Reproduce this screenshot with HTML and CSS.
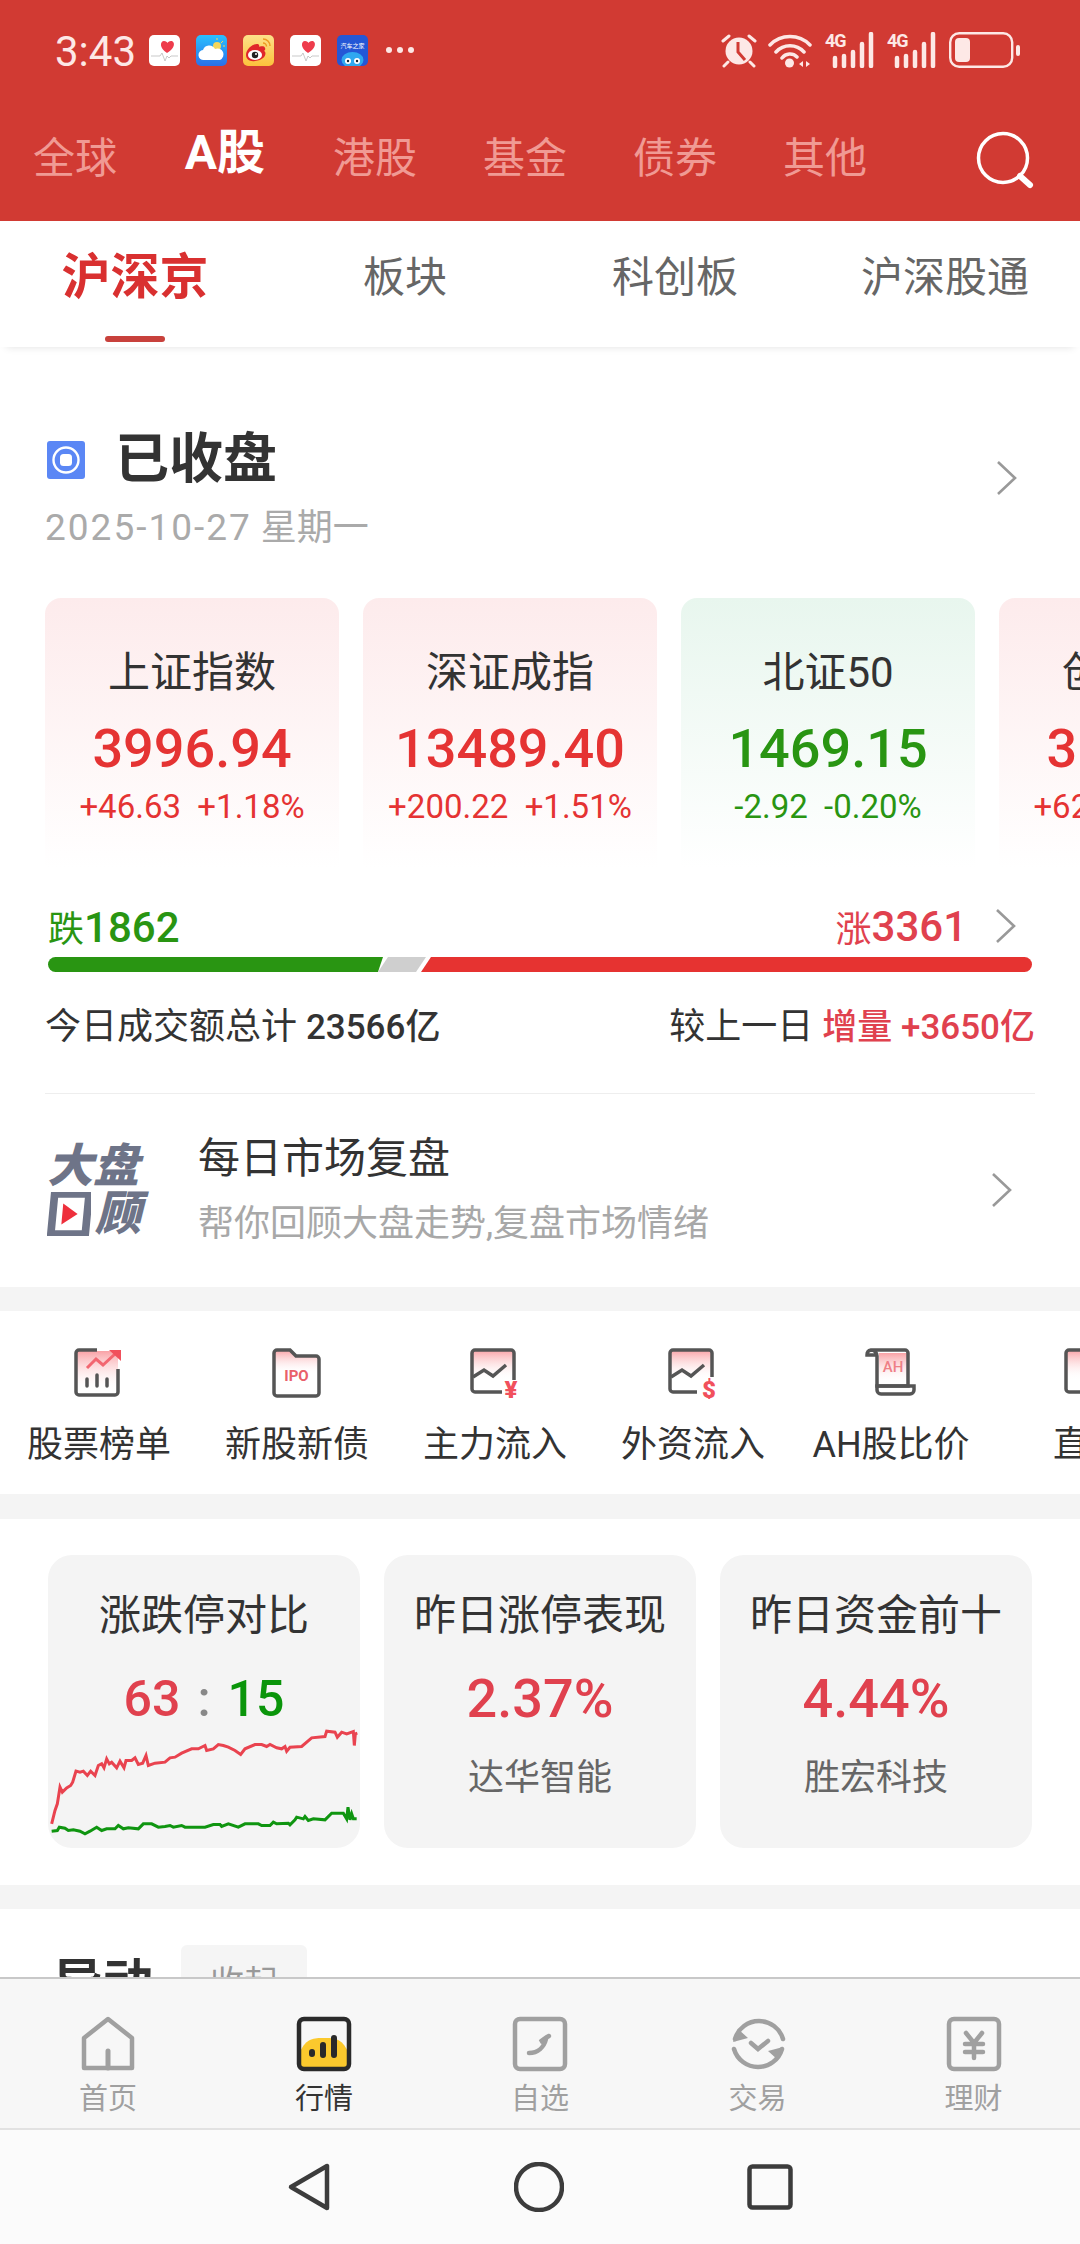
FILE: index.html
```html
<!DOCTYPE html>
<html lang="zh-CN">
<head>
<meta charset="utf-8">
<title>行情</title>
<link rel="stylesheet" href="styles.css">
</head>
<body>
<div class="app">
  <header class="top">
    <div class="status">
      <div class="status-left">
        <span class="time">3:43</span>
        <svg class="app-ic" viewBox="0 0 31 31"><rect width="31" height="31" rx="5" fill="#fff"/><path d="M15 17c-8-5-7-12-3-12 2 0 3 1 3.500 2 .5-1 1.500-2 3.500-2 4 0 5 7-4 12z" transform="translate(3 1)" fill="#ee3c4c"/><path d="M2 21h9l2-3 3 8 2-5 2 2 2-2h7" fill="none" stroke="#bbb" stroke-width=".8"/></svg>
        <svg class="app-ic" viewBox="0 0 31 31"><defs><linearGradient id="sky" x1="0" y1="0" x2="0" y2="1"><stop offset="0" stop-color="#2ac0ff"/><stop offset="1" stop-color="#2a6fe8"/></linearGradient></defs><rect width="31" height="31" rx="5" fill="url(#sky)"/><circle cx="21" cy="11" r="4" fill="#f4d65c"/><path d="M21 3v2M27 6l-2 2M29 11h-2" stroke="#f4d65c" stroke-width="1"/><path d="M8 25a5 5 0 0 1-1-10 6.500 6.500 0 0 1 12-1 5.500 5.500 0 0 1 5 11z" fill="#fff"/></svg>
        <svg class="app-ic" viewBox="0 0 31 31"><defs><linearGradient id="wb" x1="0" y1="0" x2="0" y2="1"><stop offset="0" stop-color="#fde08a"/><stop offset="1" stop-color="#fcc23c"/></linearGradient></defs><rect width="31" height="31" rx="5" fill="url(#wb)"/><path d="M3 20c0-6 7-12 12-11 2 1 1 3 1 3s5-2 6 1c1 2-1 3-1 3 3 1 2 9-9 10C7 27 3 24 3 20z" fill="#e0262a"/><ellipse cx="12" cy="20" rx="7" ry="5" fill="#fff"/><circle cx="12" cy="20" r="3.200" fill="#222"/><circle cx="13" cy="19" r="1" fill="#fff"/><path d="M20 4a7 7 0 0 1 7 7M20 8a3.500 3.500 0 0 1 3.500 3.500" fill="none" stroke="#ee9a22" stroke-width="1.500"/></svg>
        <svg class="app-ic" viewBox="0 0 31 31"><rect width="31" height="31" rx="5" fill="#fff"/><path d="M15 17c-8-5-7-12-3-12 2 0 3 1 3.500 2 .5-1 1.500-2 3.500-2 4 0 5 7-4 12z" transform="translate(3 1)" fill="#ee3c4c"/><path d="M2 21h9l2-3 3 8 2-5 2 2 2-2h7" fill="none" stroke="#bbb" stroke-width=".8"/></svg>
        <svg class="app-ic" viewBox="0 0 31 31"><rect width="31" height="31" rx="5" fill="#2457d6"/><text class="auto-text" x="15.500" y="13" text-anchor="middle">汽车之家</text><ellipse cx="15.500" cy="25" rx="11" ry="8" fill="#2fa8f0"/><circle cx="11" cy="26" r="3" fill="#fff"/><circle cx="20" cy="26" r="3" fill="#fff"/><circle cx="11" cy="26" r="1.200" fill="#123"/><circle cx="20" cy="26" r="1.200" fill="#123"/></svg>
        <span class="more-dots"><i></i><i></i><i></i></span>
      </div>
      <div class="status-right">
        <svg class="st-alarm" viewBox="0 0 36 36"><circle cx="18" cy="19" r="13.500" fill="#fde8e6"/><path d="M17 10v10l7 8" fill="none" stroke="#d13a33" stroke-width="3"/><path d="M2 9l6-5M34 9l-6-5M7 30l-4 4M29 30l4 4" stroke="#fde8e6" stroke-width="3" stroke-linecap="round"/></svg>
        <svg class="st-wifi" viewBox="0 0 44 36"><path d="M2 13a28 28 0 0 1 40 0M8 20a19 19 0 0 1 28 0M14 26a10 10 0 0 1 15-1" fill="none" stroke="#fde8e6" stroke-width="3.500" stroke-linecap="round"/><circle cx="21.500" cy="31" r="4.500" fill="#fde8e6"/><path d="M35 29l-4 3 4 3zM38 29l4 3-4 3z" fill="#fde8e6"/></svg>
        <span class="sig"><span class="sig-label">4G</span><svg viewBox="0 0 50 36"><path d="M10 26v8M19 24v10M28 20v14M37 12v22M46 2v32" fill="none" stroke="#fde8e6" stroke-width="4.500" stroke-linecap="round"/></svg></span>
        <span class="sig"><span class="sig-label">4G</span><svg viewBox="0 0 50 36"><path d="M10 26v8M19 24v10M28 20v14M37 12v22M46 2v32" fill="none" stroke="#fde8e6" stroke-width="4.500" stroke-linecap="round"/></svg></span>
        <svg class="st-batt" viewBox="0 0 72 36"><rect x="1.200" y="1.200" width="62" height="33.600" rx="9" fill="none" stroke="#fde8e6" stroke-width="2.400"/><rect x="6" y="6" width="15" height="24" rx="4" fill="#fde8e6"/><rect x="67" y="13" width="4" height="11" rx="2" fill="#fde8e6"/></svg>
      </div>
    </div>
    <nav class="market-tabs">
      <span class="m-tab">全球</span>
      <span class="m-tab m-tab-on">A股</span>
      <span class="m-tab">港股</span>
      <span class="m-tab">基金</span>
      <span class="m-tab">债券</span>
      <span class="m-tab">其他</span>
      <svg class="search" viewBox="0 0 58 58"><circle cx="27" cy="27" r="24.500" fill="none" stroke="#fff" stroke-width="3.500"/><path d="M44 45l10 9" stroke="#fff" stroke-width="6" stroke-linecap="round"/></svg>
    </nav>
  </header>

  <nav class="sub-tabs">
    <span class="s-tab s-tab-on">沪深京</span>
    <span class="s-tab">板块</span>
    <span class="s-tab">科创板</span>
    <span class="s-tab">沪深股通</span>
  </nav>

  <main class="content">
    <section class="overview">
      <div class="head-row">
        <div class="head-text">
          <div class="head-title">
            <svg class="closed-ic" viewBox="0 0 38 38"><rect width="38" height="38" rx="3" fill="#5b87f5"/><circle cx="19" cy="19" r="12.500" fill="none" stroke="#fff" stroke-width="2.400"/><rect x="13" y="13" width="12" height="12" rx="3.500" fill="#fff"/></svg>
            <h1>已收盘</h1>
          </div>
          <p class="date"><span class="date-num">2025-10-27</span> 星期一</p>
        </div>
        <svg class="chev chev-head" viewBox="0 0 22 36"><path d="M2 2l17 16L2 34" fill="none" stroke="#999" stroke-width="2.600"/></svg>
      </div>

      <div class="index-row">
        <div class="idx idx-up"><div class="idx-name">上证指数</div><div class="idx-val">3996.94</div><div class="idx-chg">+46.63&nbsp;&nbsp;+1.18%</div></div>
        <div class="idx idx-up"><div class="idx-name">深证成指</div><div class="idx-val">13489.40</div><div class="idx-chg">+200.22&nbsp;&nbsp;+1.51%</div></div>
        <div class="idx idx-down"><div class="idx-name">北证50</div><div class="idx-val">1469.15</div><div class="idx-chg">-2.92&nbsp;&nbsp;-0.20%</div></div>
        <div class="idx idx-up"><div class="idx-name">创业板指</div><div class="idx-val">3142.18</div><div class="idx-chg">+62.62&nbsp;&nbsp;+2.00%</div></div>
      </div>

      <div class="breadth-head">
        <span class="fall">跌<b>1862</b></span>
        <span class="rise">涨<b>3361</b><svg class="chev chev-rise" viewBox="0 0 22 36"><path d="M2 2l17 16L2 34" fill="none" stroke="#999" stroke-width="2.600"/></svg></span>
      </div>
      <div class="bar">
        <i class="bar-g"></i><i class="bar-n"></i><i class="bar-r"></i>
      </div>
      <div class="volume">
        <span>今日成交额总计 <b>23566亿</b></span>
        <span>较上一日 <b class="red">增量 +3650亿</b></span>
      </div>

      <div class="review">
        <div class="logo">
          <span class="logo-t">大盘</span>
          <span class="logo-b"><svg viewBox="0 0 46 46"><path d="M8 2h36l-4 42H4z" fill="#fff" stroke="#6e7488" stroke-width="8"/><path d="M17 12l15 11-17 11z" fill="#ee2f3c"/></svg><span>顾</span></span>
        </div>
        <div class="review-text">
          <div class="review-title">每日市场复盘</div>
          <div class="review-sub">帮你回顾大盘走势,复盘市场情绪</div>
        </div>
        <svg class="chev chev-review" viewBox="0 0 22 36"><path d="M2 2l17 16L2 34" fill="none" stroke="#999" stroke-width="2.600"/></svg>
      </div>
    </section>

    <section class="quick">
      <div class="q-item">
        <svg class="q-ic" viewBox="0 0 52 52"><defs><linearGradient id="pk" x1="0" y1="0" x2="0" y2="1"><stop offset="0" stop-color="#f9a2a6"/><stop offset="1" stop-color="#fff" stop-opacity="0"/></linearGradient></defs><rect x="3" y="4" width="42" height="40" fill="url(#pk)"/><path d="M24 3H6a3 3 0 0 0-3 3v39a3 3 0 0 0 3 3h36a3 3 0 0 0 3-3V22" fill="none" stroke="#555" stroke-width="3.500"/><path d="M14 21l9-9 7 6 12-11" fill="none" stroke="#f26670" stroke-width="3"/><path d="M36 3h12v11z" fill="#f1505c"/><path d="M14 32v7M24 28v11M34 32v7" stroke="#555" stroke-width="3.500" stroke-linecap="round"/></svg>
        <span class="q-label">股票榜单</span>
      </div>
      <div class="q-item">
        <svg class="q-ic" viewBox="0 0 52 52"><path d="M3 6a3 3 0 0 1 3-3h12l6 6h21a3 3 0 0 1 3 3v15H3z" fill="url(#pk)"/><path d="M3 6a3 3 0 0 1 3-3h13l6 6h20a3 3 0 0 1 3 3v34a3 3 0 0 1-3 3H6a3 3 0 0 1-3-3z" fill="none" stroke="#555" stroke-width="3.500"/><text class="ipo-text" x="25.500" y="34" text-anchor="middle">IPO</text></svg>
        <span class="q-label">新股新债</span>
      </div>
      <div class="q-item">
        <svg class="q-ic" viewBox="0 0 52 52"><rect x="3" y="3" width="42" height="30" fill="url(#pk)"/><path d="M33 45H6a3 3 0 0 1-3-3V6a3 3 0 0 1 3-3h36a3 3 0 0 1 3 3v27" fill="none" stroke="#555" stroke-width="3.500"/><path d="M4 30l11-7 9 6 13-11" fill="none" stroke="#555" stroke-width="3.500"/><text class="cur-text" x="42" y="51" text-anchor="middle">¥</text></svg>
        <span class="q-label">主力流入</span>
      </div>
      <div class="q-item">
        <svg class="q-ic" viewBox="0 0 52 52"><rect x="3" y="3" width="42" height="30" fill="url(#pk)"/><path d="M30 45H6a3 3 0 0 1-3-3V6a3 3 0 0 1 3-3h36a3 3 0 0 1 3 3v24" fill="none" stroke="#555" stroke-width="3.500"/><path d="M4 30l11-7 9 6 13-11" fill="none" stroke="#555" stroke-width="3.500"/><text class="cur-text" x="42" y="51" text-anchor="middle">$</text></svg>
        <span class="q-label">外资流入</span>
      </div>
      <div class="q-item">
        <svg class="q-ic" viewBox="0 0 52 52"><rect x="14" y="6" width="30" height="30" fill="url(#pk)"/><path d="M6 3h34a3 3 0 0 1 3 3v33H12V9a6 6 0 0 0-6-6 5 5 0 0 0-4 5h10" fill="none" stroke="#555" stroke-width="3.500"/><path d="M12 39v4a4 4 0 0 0 4 4h29a4 4 0 0 0 4-4v-4z" fill="none" stroke="#555" stroke-width="3.500"/><text class="ah-text" x="28" y="25" text-anchor="middle">AH</text></svg>
        <span class="q-label q-label-latin">AH股比价</span>
      </div>
      <div class="q-item">
        <svg class="q-ic" viewBox="0 0 52 52"><rect x="3" y="3" width="42" height="30" fill="url(#pk)"/><path d="M33 45H6a3 3 0 0 1-3-3V6a3 3 0 0 1 3-3h36a3 3 0 0 1 3 3v27" fill="none" stroke="#555" stroke-width="3.500"/></svg>
        <span class="q-label">直播</span>
      </div>
    </section>

    <section class="stats">
      <div class="stat">
        <div class="stat-name">涨跌停对比</div>
        <div class="stat-val stat-ratio"><span class="red">63</span><span class="ratio-sep">:</span><span class="green">15</span></div>
        <svg class="stat-chart" viewBox="144 590 936 362">
          <polyline fill="none" stroke="#e9434f" stroke-width="9" points="155,880 165,840 172,820 180,770 187,785 200,772 212,765 218,755 228,722 240,725 250,722 262,735 272,722 285,735 295,705 305,700 312,712 320,685 328,700 335,695 350,712 360,692 372,712 378,690 395,690 405,682 415,702 428,698 438,675 445,705 465,698 495,695 510,682 525,680 545,668 575,655 595,655 615,645 620,660 640,655 655,642 670,645 685,650 705,660 722,672 735,655 765,642 785,642 800,648 810,642 830,652 845,655 855,648 860,662 870,650 905,648 935,622 975,618 980,602 1005,605 1012,620 1025,605 1040,610 1060,603 1063,645 1066,610 1072,608"/>
          <polyline fill="none" stroke="#0f9510" stroke-width="9" points="155,902 172,900 178,890 195,893 205,900 220,898 240,902 255,910 270,902 290,890 305,900 320,895 345,895 355,885 370,895 385,892 415,895 430,880 455,880 475,890 495,888 510,885 520,890 545,885 555,890 615,890 640,882 660,882 665,888 685,880 715,890 735,880 775,880 785,885 810,885 820,875 830,880 865,878 870,883 885,868 890,860 910,865 915,858 925,870 940,865 975,868 995,848 1030,848 1040,865 1044,830 1050,868 1055,850 1060,865 1070,865"/>
        </svg>
      </div>
      <div class="stat">
        <div class="stat-name">昨日涨停表现</div>
        <div class="stat-val red">2.37%</div>
        <div class="stat-sub">达华智能</div>
      </div>
      <div class="stat">
        <div class="stat-name">昨日资金前十</div>
        <div class="stat-val red">4.44%</div>
        <div class="stat-sub">胜宏科技</div>
      </div>
    </section>

    <section class="moves">
      <h2>异动</h2>
      <span class="fold">收起</span>
    </section>
  </main>

  <nav class="tabbar">
    <div class="tb-item">
      <svg class="tb-ic" viewBox="0 0 56 56"><path d="M28 3L4 22v30h48V22z" fill="none" stroke="#a0a0a0" stroke-width="4.500" stroke-linejoin="round"/><path d="M28 35v17" stroke="#a0a0a0" stroke-width="5" stroke-linecap="round"/></svg>
      <span>首页</span>
    </div>
    <div class="tb-item tb-on">
      <svg class="tb-ic" viewBox="0 0 56 56"><path d="M4 36c6-14 14-14 24-14s18 0 24 14v17H4z" fill="#fbc92d"/><rect x="3" y="3" width="50" height="50" rx="5" fill="none" stroke="#2a2a2a" stroke-width="4.500"/><path d="M16 36v2M27 29v10M38 22v17" stroke="#2a2a2a" stroke-width="6" stroke-linecap="round"/></svg>
      <span>行情</span>
    </div>
    <div class="tb-item">
      <svg class="tb-ic" viewBox="0 0 56 56"><rect x="3" y="3" width="50" height="50" rx="5" fill="none" stroke="#a0a0a0" stroke-width="4.500"/><path d="M17 37c9 0 15-6 17-14l-6 3c3-2 6-5 9-6" fill="none" stroke="#a0a0a0" stroke-width="4.500" stroke-linecap="round"/></svg>
      <span>自选</span>
    </div>
    <div class="tb-item">
      <svg class="tb-ic" viewBox="0 0 56 56"><path d="M5 23A25 25 0 0 1 53 23M52 33A25 25 0 0 1 4 33" fill="none" stroke="#a0a0a0" stroke-width="4.500" stroke-linecap="round"/><path d="M3 26l5-13 10 9zM53 31l-5 13-10-9z" fill="#a0a0a0"/><path d="M21 27l7 6 10-8" fill="none" stroke="#a0a0a0" stroke-width="4.500" stroke-linecap="round"/></svg>
      <span>交易</span>
    </div>
    <div class="tb-item">
      <svg class="tb-ic" viewBox="0 0 56 56"><rect x="3" y="3" width="50" height="50" rx="5" fill="none" stroke="#a0a0a0" stroke-width="4.500"/><path d="M20 17l8 10 8-10M19 28h18M19 36h18M28 27v15" fill="none" stroke="#a0a0a0" stroke-width="4.500" stroke-linecap="round"/></svg>
      <span>理财</span>
    </div>
  </nav>

  <nav class="sysnav">
    <svg class="sys-back" viewBox="0 0 44 50"><path d="M4 25L40 4v42z" fill="none" stroke="#3c3c3c" stroke-width="4.500" stroke-linejoin="round"/></svg>
    <svg class="sys-home" viewBox="0 0 50 50"><circle cx="25" cy="25" r="23" fill="none" stroke="#3c3c3c" stroke-width="4.500"/></svg>
    <svg class="sys-recent" viewBox="0 0 46 46"><rect x="2.500" y="2.500" width="41" height="41" rx="3" fill="none" stroke="#3c3c3c" stroke-width="4.500"/></svg>
  </nav>
</div>
</body>
</html>
```

FILE: styles.css
```css
* { box-sizing: border-box; }
html, body { margin: 0; padding: 0; background: #fff; }
body { font-family: "Roboto", "Noto Sans CJK SC", sans-serif; color: #333; }
i { display: block; font-style: normal; }
h1, h2, p { margin: 0; }

.app { width: 1080px; height: 2244px; display: flex; flex-direction: column; overflow: hidden; }

/* red header */
.top { height: 221px; background: #d13a33; flex: none; display: flex; flex-direction: column; }
.status { height: 102px; padding: 32px 59px 0 55px; display: flex; justify-content: space-between; align-items: flex-start; }
.status-left { display: flex; align-items: center; height: 36px; }
.time { font-size: 42px; line-height: 36px; color: #fde8e6; width: 94px; padding-top: 4px; }
.app-ic { width: 31px; height: 31px; margin-right: 16px; }
.auto-text { font-family: "Noto Sans CJK SC", sans-serif; font-size: 6px; fill: #fff; }
.more-dots { display: flex; gap: 5px; margin-left: 2px; }
.more-dots i { width: 6px; height: 6px; border-radius: 50%; background: #fde8e6; }
.status-right { display: flex; align-items: center; height: 36px; }
.st-alarm { width: 36px; height: 36px; margin-right: 11px; }
.st-wifi { width: 44px; height: 36px; margin-right: 13px; }
.sig { position: relative; width: 50px; height: 36px; margin-right: 12px; }
.sig svg { width: 50px; height: 36px; display: block; }
.sig-label { position: absolute; left: 0; top: -1px; font-size: 18px; line-height: 20px; font-weight: 700; color: #fde8e6; letter-spacing: -1px; }
.st-batt { width: 72px; height: 36px; }

.market-tabs { flex: 1; display: flex; align-items: flex-start; gap: 66px; padding: 30px 45px 0 33px; position: relative; }
.m-tab { width: 84px; font-size: 42px; line-height: 54px; color: #f09a94; white-space: nowrap; text-align: center; }
.m-tab-on { color: #fff; font-weight: 700; font-size: 48px; margin-top: -6px; }
.search { width: 58px; height: 58px; position: absolute; right: 46px; top: 29px; }

/* sub tabs */
.sub-tabs { height: 126px; flex: none; display: grid; grid-template-columns: repeat(4, 270px); background: #fff; box-shadow: 0 6px 8px -6px rgba(0,0,0,.12); position: relative; }
.s-tab { font-size: 42px; line-height: 114px; color: #666; text-align: center; position: relative; white-space: nowrap; }
.s-tab-on { font-size: 49px; font-weight: 700; color: #d93030; }
.s-tab-on::after { content: ""; position: absolute; left: 105px; bottom: 5px; width: 60px; height: 6px; border-radius: 3px; background: #c8413c; }

.content { flex: 1; background: #f4f4f4; overflow: hidden; min-height: 0; }

/* overview */
.overview { height: 940px; background: #fff; padding: 83px 45px 0; }
.head-row { display: flex; justify-content: space-between; align-items: flex-start; height: 137px; padding-right: 17px; }
.head-title { display: flex; align-items: center; gap: 30px; padding-left: 2px; height: 60px; }
.closed-ic { width: 38px; height: 38px; }
h1 { font-size: 54px; font-weight: 700; line-height: 60px; color: #333; }
.date { font-size: 36px; line-height: 50px; color: #aaa; margin-top: 13px; }
.date-num { font-size: 37px; letter-spacing: 2px; }
.chev { display: block; flex: none; }
.chev-head { width: 22px; height: 36px; margin-top: 30px; }

.index-row { display: flex; gap: 24px; margin-top: 31px; width: 1240px; }
.idx { width: 294px; height: 270px; border-radius: 16px 16px 0 0; padding-top: 45px; text-align: center; flex: none; }
.idx-up { background: linear-gradient(#fdebec, #fff); }
.idx-down { background: linear-gradient(#e8f6ee, #fff); }
.idx-name { font-size: 42px; line-height: 60px; color: #333; }
.idx-val { font-size: 54px; line-height: 64px; font-weight: 500; margin-top: 14px; }
.idx-chg { font-size: 33px; line-height: 44px; margin-top: 4px; white-space: nowrap; }
.idx-up .idx-val, .idx-up .idx-chg { color: #e53333; }
.idx-down .idx-val, .idx-down .idx-chg { color: #299512; }

.breadth-head { display: flex; justify-content: space-between; align-items: center; height: 50px; margin-top: 33px; padding: 0 18px 0 3px; font-size: 36px; }
.breadth-head b { font-size: 42px; font-weight: 500; }
.fall { color: #299512; }
.rise { color: #e0414e; display: flex; align-items: center; }
.chev-rise { width: 22px; height: 36px; margin-left: 28px; }

.bar { display: flex; height: 15px; margin: 6px 3px 0; }
.bar-g { width: 335px; background: #299512; border-radius: 8px 0 0 8px; clip-path: polygon(0 0, 100% 0, 98.500% 100%, 0 100%); }
.bar-n { width: 48px; margin-left: -5px; background: #cfcfcf; clip-path: polygon(10px 0, 100% 0, 38px 100%, 0 100%); }
.bar-r { flex: 1; margin-left: -5px; background: #e63331; border-radius: 0 8px 8px 0; clip-path: polygon(10px 0, 100% 0, 100% 100%, 0 100%); }

.volume { display: flex; justify-content: space-between; align-items: center; height: 52px; margin-top: 25px; font-size: 36px; color: #333; }
.volume b { font-size: 35px; font-weight: 500; }
.red { color: #e0414e; }
.green { color: #0a950a; }

.review { display: flex; align-items: center; margin-top: 44px; height: 192px; border-top: 1px solid #eee; position: relative; }
.logo { width: 103px; margin-left: 2px; display: flex; flex-direction: column; color: #6e7488; }
.logo-t, .logo-b { font-size: 46px; line-height: 48px; font-weight: 900; font-style: italic; white-space: nowrap; display: flex; align-items: center; height: 48px; }
.logo-b svg { width: 44px; height: 44px; margin-right: 4px; flex: none; }
.review-text { margin-left: 48px; flex: 1; }
.review-title { font-size: 42px; line-height: 56px; color: #333; }
.review-sub { font-size: 36px; line-height: 50px; color: #a8a8a8; margin-top: 12px; }
.chev-review { width: 22px; height: 36px; margin-right: 22px; }

/* quick entries */
.quick { height: 183px; margin-top: 24px; background: #fff; display: flex; overflow: hidden; padding-top: 36px; }
.q-item { width: 198px; flex: none; display: flex; flex-direction: column; align-items: center; }
.q-ic { width: 52px; height: 52px; display: block; }
.q-label { font-size: 36px; line-height: 50px; color: #333; margin-top: 21px; white-space: nowrap; }
.ipo-text { font-family: "Roboto", sans-serif; font-weight: 700; font-size: 15px; fill: #e9606a; }
.ah-text { font-family: "Roboto", sans-serif; font-weight: 500; font-size: 15px; fill: #ef7f86; }
.cur-text { font-family: "Roboto", sans-serif; font-weight: 900; font-size: 24px; fill: #f1505c; }

/* stats */
.stats { height: 366px; margin-top: 25px; background: #fff; padding: 36px 48px 0; display: flex; gap: 24px; }
.stat { width: 312px; height: 293px; background: #f4f4f4; border-radius: 24px; text-align: center; padding-top: 33px; position: relative; overflow: hidden; }
.stat-name { font-size: 42px; line-height: 56px; color: #333; }
.stat-val { font-size: 54px; line-height: 60px; font-weight: 500; margin-top: 25px; display: flex; justify-content: center; }
.stat-ratio { font-size: 50px; }
.stat-val.red { color: #e0414e; }
.ratio-sep { color: #888; margin: 0 17px; }
.stat-sub { font-size: 36px; line-height: 50px; color: #666; margin-top: 24px; }
.stat-chart { position: absolute; left: 0; bottom: 0; width: 312px; height: 121px; display: block; }

/* moves (clipped by the tab bar) */
.moves { height: 120px; margin-top: 24px; background: #fff; padding: 36px 0 0 53px; display: flex; align-items: flex-start; gap: 28px; }
h2 { font-size: 50px; line-height: 60px; font-weight: 700; color: #333; margin-top: 8px; }
.fold { width: 126px; height: 70px; background: #f5f5f5; border-radius: 6px; color: #999; font-size: 34px; line-height: 76px; text-align: center; }

/* tab bar */
.tabbar { height: 153px; flex: none; background: #f7f7f7; border-top: 2px solid #c8c8c8; border-bottom: 2px solid #e2e2e2; display: grid; grid-template-columns: 216px 216px 216px 219px 213px; padding-top: 37px; }
.tb-item { display: flex; flex-direction: column; align-items: center; color: #a0a0a0; font-size: 29px; line-height: 36px; }
.tb-ic { width: 56px; height: 56px; display: block; margin-bottom: 9px; }
.tb-on { color: #333; }

/* system nav */
.sysnav { height: 114px; flex: none; background: #fbfbfb; display: flex; align-items: center; justify-content: center; gap: 183px; }
.sys-back { width: 44px; height: 50px; }
.sys-home { width: 50px; height: 50px; }
.sys-recent { width: 46px; height: 46px; }
```
